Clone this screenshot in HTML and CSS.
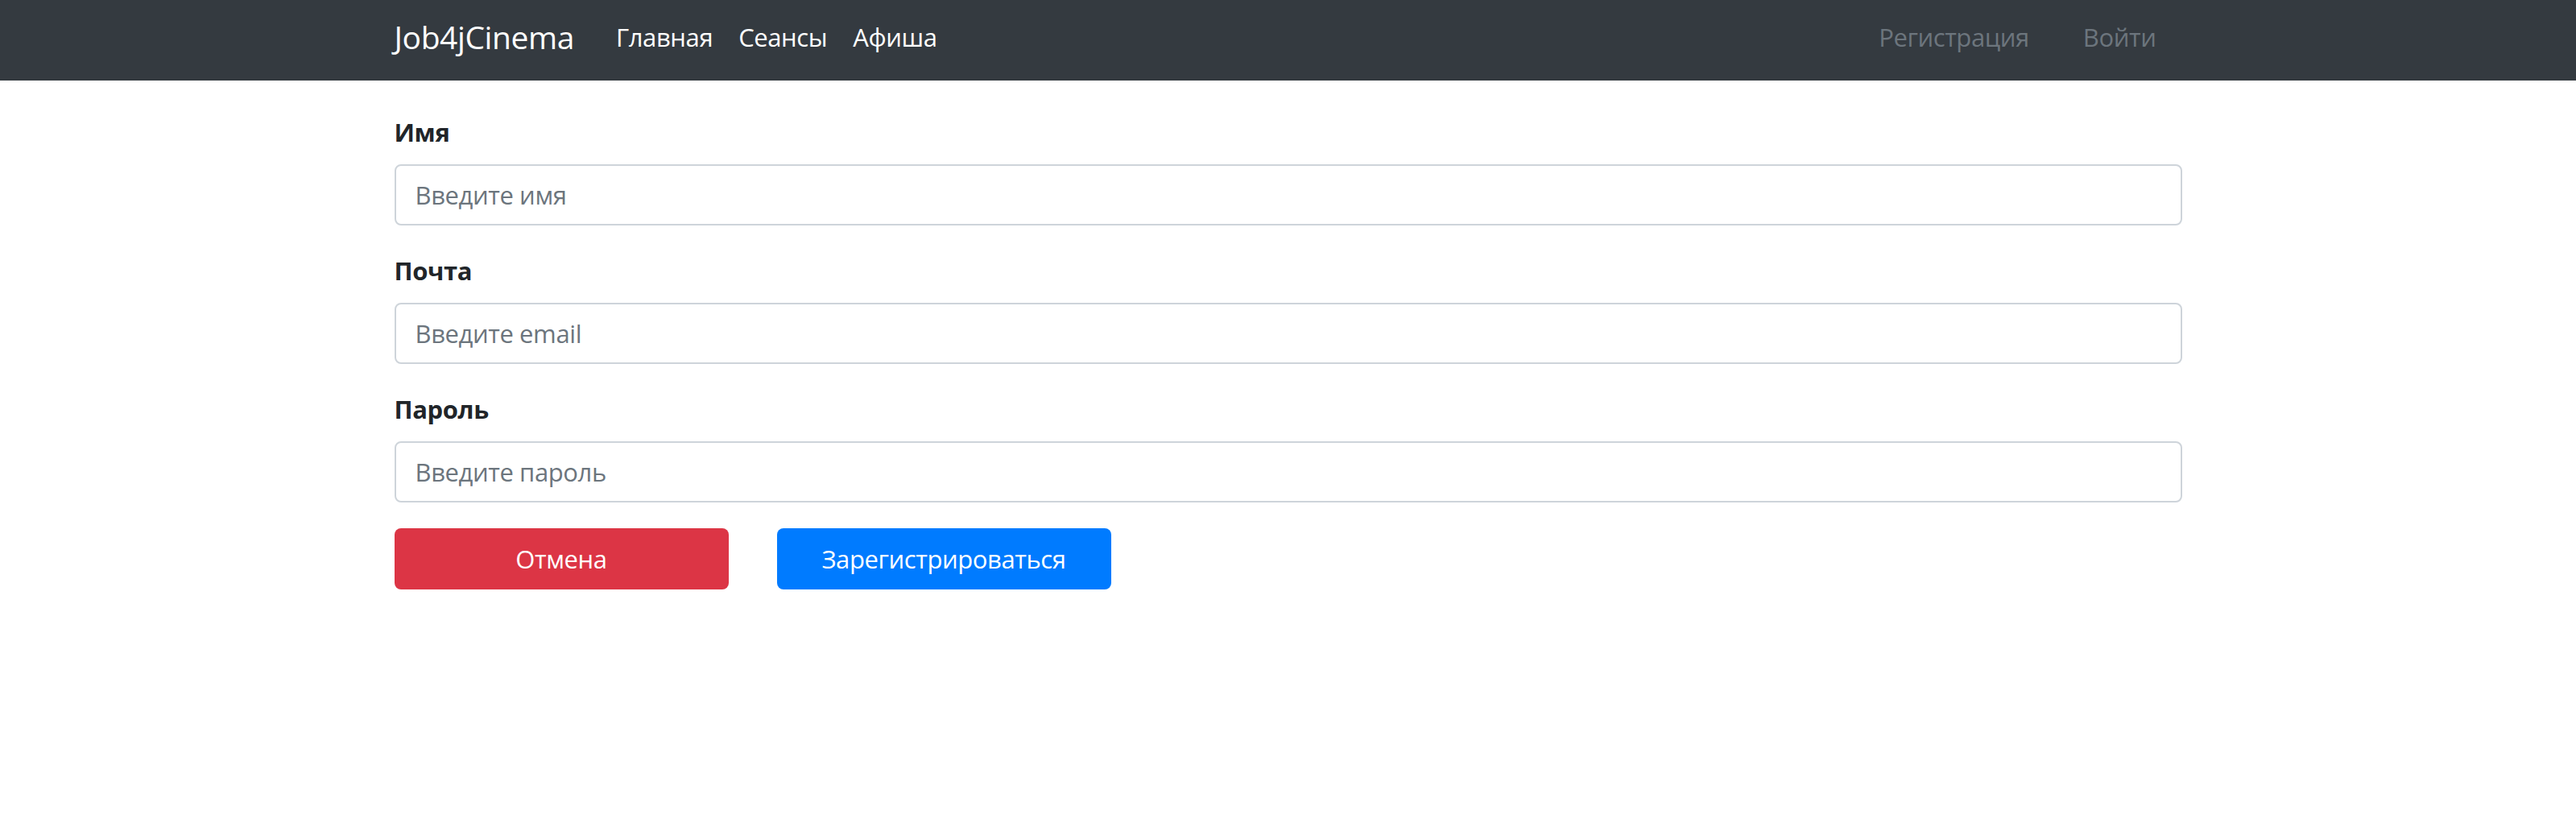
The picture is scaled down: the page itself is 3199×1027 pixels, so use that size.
FILE: index.html
```html
<!DOCTYPE html>
<html lang="ru">
<head>
<meta charset="utf-8">
<title>Job4jCinema</title>
<link rel="stylesheet" href="styles.css">
</head>
<body>
<nav class="navbar">
  <div class="container nav-inner">
    <a class="brand" href="#">Job4jCinema</a>
    <div class="nav-main">
      <a class="nav-link" href="#">Главная</a>
      <a class="nav-link" href="#">Сеансы</a>
      <a class="nav-link" href="#">Афиша</a>
    </div>
    <div class="nav-right">
      <a class="nav-link muted" href="#">Регистрация</a>
      <a class="nav-link muted" href="#">Войти</a>
    </div>
  </div>
</nav>
<main class="container content">
  <form class="form">
    <div class="form-group">
      <label class="label" for="name">Имя</label>
      <input class="input" id="name" type="text" placeholder="Введите имя">
    </div>
    <div class="form-group">
      <label class="label" for="email">Почта</label>
      <input class="input" id="email" type="email" placeholder="Введите email">
    </div>
    <div class="form-group">
      <label class="label" for="password">Пароль</label>
      <input class="input" id="password" type="password" placeholder="Введите пароль">
    </div>
    <div class="actions">
      <a class="btn btn-danger" href="#">Отмена</a>
      <button class="btn btn-primary" type="button">Зарегистрироваться</button>
    </div>
  </form>
</main>
</body>
</html>
```
FILE: styles.css
```css
* { box-sizing: border-box; }
body {
  margin: 0;
  font-family: "Open Sans", "Noto Sans", sans-serif;
  font-size: 31px;
  letter-spacing: -0.4px;
  line-height: 1.5;
  color: #212529;
  background: #fff;
}
.container {
  width: 2220px;
  margin: 0 auto;
}
.navbar {
  background: #343a40;
  height: 100px;
}
.nav-inner {
  display: flex;
  align-items: center;
  height: 100%;
  padding-bottom: 8px;
}
.brand {
  font-size: 39px;
  letter-spacing: -0.4px;
  color: #fff;
  text-decoration: none;
  margin-right: 36px;
  line-height: 1.5;
}
.nav-main, .nav-right {
  display: flex;
  align-items: center;
}
.nav-right {
  margin-left: auto;
  gap: 35px;
  margin-right: 16px;
}
.nav-link {
  color: #fff;
  text-decoration: none;
  padding: 8px 16px;
  font-size: 31px;
}
.nav-link.muted {
  color: #6c757d;
}
.content {
  padding-top: 40px;
}
.form-group {
  margin-bottom: 32px;
}
.label {
  display: block;
  font-weight: 700;
  margin-bottom: 16px;
  line-height: 48px;
}
.input {
  display: block;
  width: 100%;
  height: 76px;
  padding: 12px 24px;
  font: inherit;
  letter-spacing: inherit;
  color: #495057;
  border: 2px solid #ced4da;
  border-radius: 8px;
  background: #fff;
  outline: none;
}
.input::placeholder {
  color: #6c757d;
}
.actions {
  display: flex;
  gap: 60px;
}
.btn {
  display: flex;
  align-items: center;
  justify-content: center;
  width: 415px;
  height: 76px;
  border: none;
  border-radius: 8px;
  color: #fff;
  font: inherit;
  letter-spacing: inherit;
  text-decoration: none;
  cursor: pointer;
}
.btn-danger { background: #dc3545; }
.btn-primary { background: #007bff; }
```
